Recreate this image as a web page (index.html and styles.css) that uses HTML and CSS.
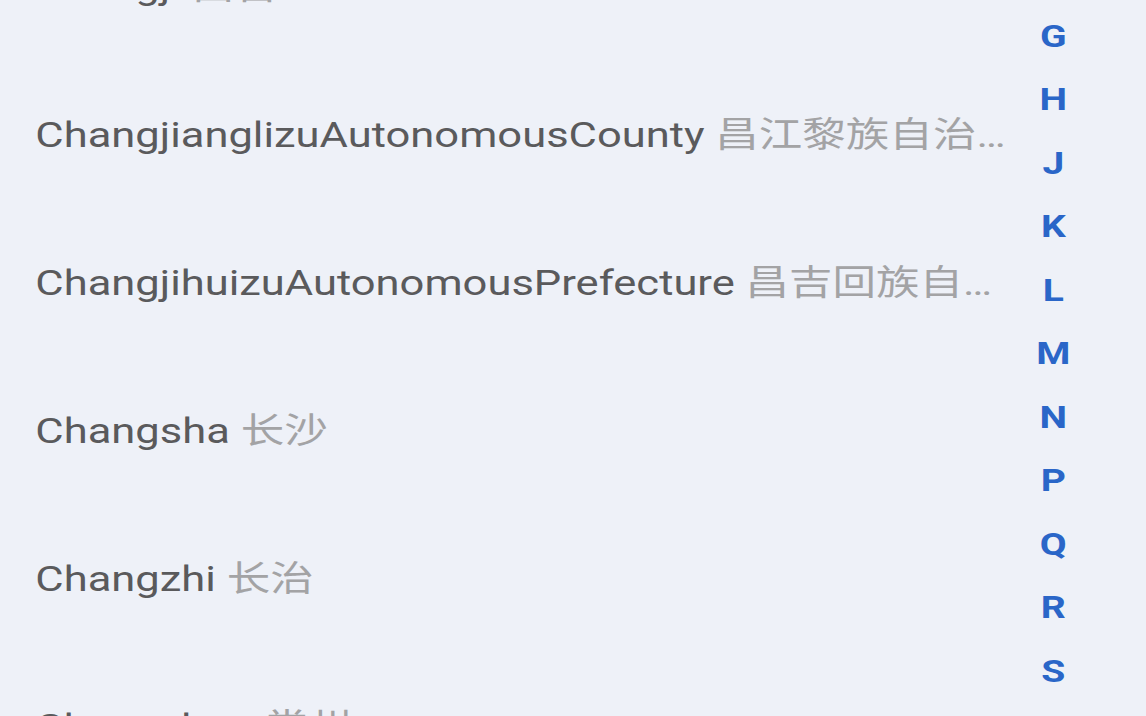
FILE: index.html
```html
<!DOCTYPE html>
<html lang="zh-CN">
<head>
  <meta charset="utf-8">
  <title>城市选择</title>
  <link rel="stylesheet" href="styles.css">
</head>
<body>
  <div class="screen">
    <ul class="city-list">
      <li class="city"><span class="city-en">Changji</span> <span class="city-zh">昌吉</span></li>
      <li class="city"><span class="city-en">ChangjianglizuAutonomousCounty</span> <span class="city-zh">昌江黎族自治县</span></li>
      <li class="city"><span class="city-en">ChangjihuizuAutonomousPrefecture</span> <span class="city-zh">昌吉回族自治州</span></li>
      <li class="city"><span class="city-en">Changsha</span> <span class="city-zh">长沙</span></li>
      <li class="city"><span class="city-en">Changzhi</span> <span class="city-zh">长治</span></li>
      <li class="city"><span class="city-en">Changzhou</span> <span class="city-zh">常州</span></li>
    </ul>
    <ol class="letter-index">
      <li>F</li>
      <li>G</li>
      <li>H</li>
      <li>J</li>
      <li>K</li>
      <li>L</li>
      <li>M</li>
      <li>N</li>
      <li>P</li>
      <li>Q</li>
      <li>R</li>
      <li>S</li>
      <li>T</li>
    </ol>
  </div>
</body>
</html>
```

FILE: styles.css
```css
html, body {
  margin: 0;
  padding: 0;
  height: 100%;
  overflow: hidden;
  background-color: #eef1f8;
}

/* the source shot is stretched sideways, so the whole screen is too */
.screen {
  display: flex;
  width: 940px;
  height: 716px;
  transform: scaleX(1.2191);
  transform-origin: 0 0;
  font-family: Roboto, "Noto Sans CJK SC", sans-serif;
}

.city-list {
  flex: 1;
  min-width: 0;
  list-style: none;
  margin: 0;
  margin-top: -87px;
  padding: 0 10px 0 29px;
}

.city {
  height: 148px;
  line-height: 148px;
  font-size: 35.7px;
  white-space: nowrap;
  overflow: hidden;
  text-overflow: ellipsis;
  color: #a3a3a5;
}

.city-en { color: #5a5a5c; }
.city-zh { color: #a3a3a5; }

.letter-index {
  width: 52px;
  margin: 0;
  margin-top: -59px;
  margin-right: 50px;
  padding: 0;
  list-style: none;
  text-align: center;
}

.letter-index li {
  height: 63.5px;
  line-height: 63.5px;
  font-size: 32px;
  font-weight: bold;
  color: #2a66c8;
}
```
